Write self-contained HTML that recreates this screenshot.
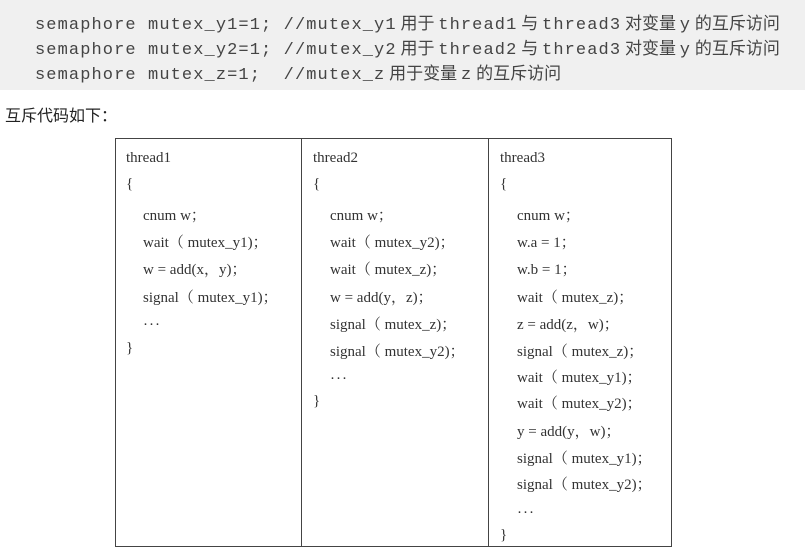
<!DOCTYPE html>
<html><head><meta charset="utf-8"><style>
body{margin:0;width:805px;height:556px;background:#fff;position:relative;overflow:hidden;color:#333}
.band{position:absolute;left:0;top:0;width:805px;height:90px;background:#f0f0f0}
.m{position:absolute;left:35px;font:17px "Liberation Mono","Noto Sans CJK SC",monospace;white-space:pre;color:#444;letter-spacing:1.1px}
.m span{font:17px "Noto Sans CJK SC",sans-serif;letter-spacing:0}
.h{position:absolute;left:5px;top:102px;font:16px "Noto Sans CJK SC",sans-serif;color:#222}
.tb{position:absolute;left:115px;top:138px;width:557px;height:409px;border:1px solid #444;box-sizing:border-box}
.v{position:absolute;top:138px;width:1px;height:409px;background:#444}
.t{position:absolute;font:15px "Liberation Serif","Noto Serif CJK SC",serif;white-space:pre;color:#333}
.d{position:absolute;font:15px "Liberation Serif",serif;color:#333;letter-spacing:1px}
</style></head><body>
<div class="band"></div>
<div class="m" style="top:9px">semaphore mutex_y1=1; //mutex_y1<span> 用于 </span>thread1<span> 与 </span>thread3<span> 对变量 </span>y<span> 的互斥访问</span></div>
<div class="m" style="top:34px">semaphore mutex_y2=1; //mutex_y2<span> 用于 </span>thread2<span> 与 </span>thread3<span> 对变量 </span>y<span> 的互斥访问</span></div>
<div class="m" style="top:59px">semaphore mutex_z=1;  //mutex_z<span> 用于变量 </span>z<span> 的互斥访问</span></div>
<div class="h">互斥代码如下：</div>
<div class="tb"></div>
<div class="v" style="left:301px"></div>
<div class="v" style="left:488px"></div>

<div class="t" style="left:126px;top:150px">thread1</div>
<div class="t" style="left:126px;top:176px">{</div>
<div class="t" style="left:143px;top:204px">cnum w；</div>
<div class="t" style="left:143px;top:231px">wait（ mutex_y1)；</div>
<div class="t" style="left:143px;top:258px">w = add(x，y)；</div>
<div class="t" style="left:143px;top:286px">signal（ mutex_y1)；</div>
<div class="d" style="left:143px;top:317px">···</div>
<div class="t" style="left:126px;top:340px">}</div>

<div class="t" style="left:313px;top:150px">thread2</div>
<div class="t" style="left:313px;top:176px">{</div>
<div class="t" style="left:330px;top:204px">cnum w；</div>
<div class="t" style="left:330px;top:231px">wait（ mutex_y2)；</div>
<div class="t" style="left:330px;top:258px">wait（ mutex_z)；</div>
<div class="t" style="left:330px;top:286px">w = add(y，z)；</div>
<div class="t" style="left:330px;top:313px">signal（ mutex_z)；</div>
<div class="t" style="left:330px;top:340px">signal（ mutex_y2)；</div>
<div class="d" style="left:330px;top:371px">···</div>
<div class="t" style="left:313px;top:393px">}</div>

<div class="t" style="left:500px;top:150px">thread3</div>
<div class="t" style="left:500px;top:176px">{</div>
<div class="t" style="left:517px;top:204px">cnum w；</div>
<div class="t" style="left:517px;top:231px">w.a = 1；</div>
<div class="t" style="left:517px;top:258px">w.b = 1；</div>
<div class="t" style="left:517px;top:286px">wait（ mutex_z)；</div>
<div class="t" style="left:517px;top:313px">z = add(z，w)；</div>
<div class="t" style="left:517px;top:340px">signal（ mutex_z)；</div>
<div class="t" style="left:517px;top:366px">wait（ mutex_y1)；</div>
<div class="t" style="left:517px;top:392px">wait（ mutex_y2)；</div>
<div class="t" style="left:517px;top:420px">y = add(y，w)；</div>
<div class="t" style="left:517px;top:447px">signal（ mutex_y1)；</div>
<div class="t" style="left:517px;top:473px">signal（ mutex_y2)；</div>
<div class="d" style="left:517px;top:505px">···</div>
<div class="t" style="left:500px;top:527px">}</div>
</body></html>
